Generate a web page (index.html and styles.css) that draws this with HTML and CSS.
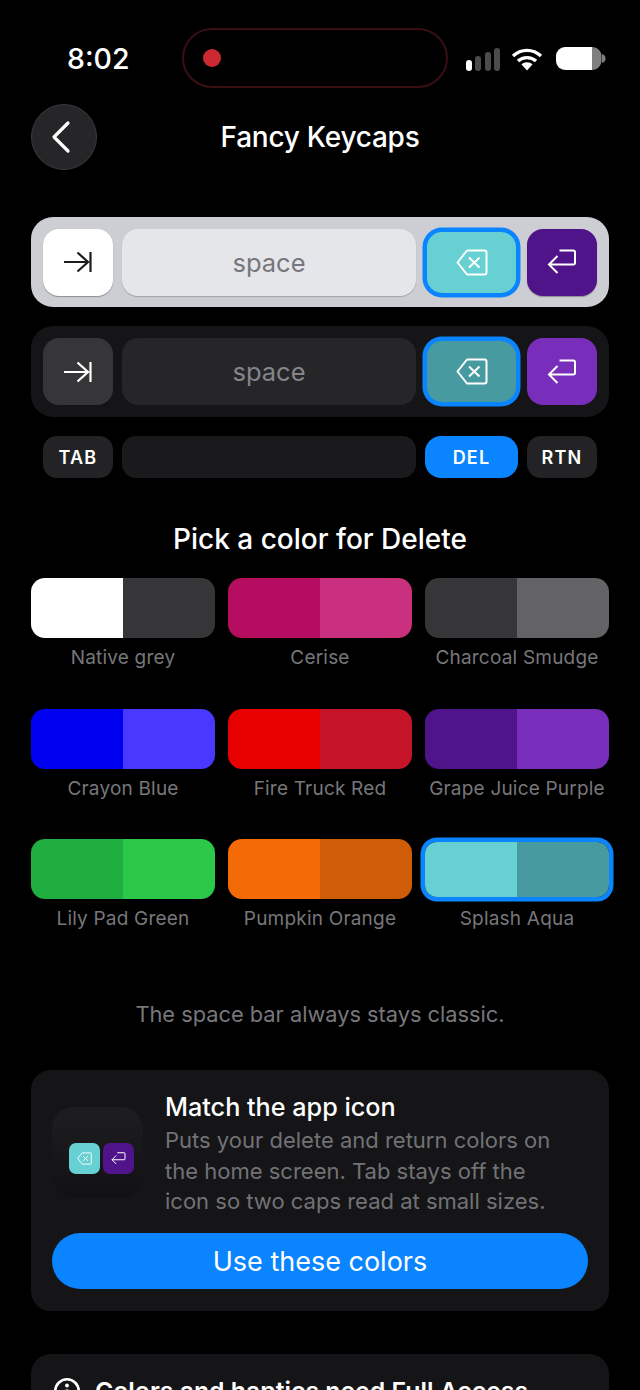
FILE: index.html
```html
<!DOCTYPE html>
<html lang="en">
<head>
<meta charset="utf-8">
<title>Fancy Keycaps</title>
<link rel="stylesheet" href="styles.css">
</head>
<body>
<svg class="defs" width="0" height="0" aria-hidden="true">
  <symbol id="i-tab" viewBox="0 0 30 22"><path d="M1 11H25.500M14.500 1.500L25 11L14.500 20.500M27.500 1V21" fill="none" stroke="currentColor" stroke-width="2.200"/></symbol>
  <symbol id="i-del" viewBox="0 0 32 27"><path d="M11 1.500H28.500A2 2 0 0 1 30.500 3.500V23.500A2 2 0 0 1 28.500 25.500H11L1.500 13.500Z" fill="none" stroke="currentColor" stroke-width="2" stroke-linejoin="round"/><path d="M13 8.500L23.500 18.500M23.500 8.500L13 18.500" fill="none" stroke="currentColor" stroke-width="2"/></symbol>
  <symbol id="i-ret" viewBox="0 0 30 26"><path d="M12.500 1.500H26.500A1.500 1.500 0 0 1 28 3V14A1.500 1.500 0 0 1 26.500 15.500H2M10.500 7L2 15.500L10.500 24" fill="none" stroke="currentColor" stroke-width="2"/></symbol>
</svg>
<div class="page">
  <header class="status">
    <span class="time">8:02</span>
    <div class="island"><span class="rec"></span></div>
    <div class="indicators">
      <svg class="signal" width="34" height="24" viewBox="0 0 34 24"><rect x="0" y="13" width="6" height="11" rx="3" fill="#fff"/><rect x="9" y="9" width="6" height="15" rx="3" fill="#4b4b4b"/><rect x="19" y="5" width="6" height="19" rx="3" fill="#4b4b4b"/><rect x="28" y="1" width="6" height="23" rx="3" fill="#4b4b4b"/></svg>
      <svg class="wifi" width="32" height="24" viewBox="0 0 32 24"><path d="M2 9C10 1.500 22 1.500 30 9M7 14C12 9.500 20 9.500 25 14M11.500 18.500C14 16.500 18 16.500 20.500 18.500" fill="none" stroke="#fff" stroke-width="3.400"/><path d="M12.500 19.500L16 17.500L19.500 19.500L16 23.500Z" fill="#fff"/></svg>
      <svg class="battery" width="50" height="24" viewBox="0 0 50 24"><path d="M9 0H36V23H9A9 9 0 0 1 0 14V9A9 9 0 0 1 9 0Z" fill="#fff"/><path d="M36 0H36.500A9 9 0 0 1 45.500 9V14A9 9 0 0 1 36.500 23H36Z" fill="#808080"/><path d="M46 7C48.500 7.500 49.500 9.500 49.500 11.500C49.500 13.500 48.500 15.500 46 16Z" fill="#808080"/></svg>
    </div>
  </header>
  <nav class="nav">
    <button class="back" type="button" aria-label="Back"><svg width="20" height="34" viewBox="0 0 20 34"><path d="M17 3L3 17L17 31" fill="none" stroke="#fff" stroke-width="3.200" stroke-linecap="round" stroke-linejoin="round"/></svg></button>
    <h1 class="title">Fancy Keycaps</h1>
  </nav>

  <section class="panel panel-light">
    <div class="key key-tab"><svg class="ico-tab"><use href="#i-tab"/></svg></div>
    <div class="key key-space">space</div>
    <div class="key key-del"><svg class="ico-del"><use href="#i-del"/></svg></div>
    <div class="key key-ret"><svg class="ico-ret"><use href="#i-ret"/></svg></div>
  </section>
  <section class="panel panel-dark">
    <div class="key key-tab"><svg class="ico-tab"><use href="#i-tab"/></svg></div>
    <div class="key key-space">space</div>
    <div class="key key-del"><svg class="ico-del"><use href="#i-del"/></svg></div>
    <div class="key key-ret"><svg class="ico-ret"><use href="#i-ret"/></svg></div>
  </section>
  <div class="chips">
    <div class="chip chip-tab">TAB</div>
    <div class="chip chip-space"></div>
    <div class="chip chip-del">DEL</div>
    <div class="chip chip-ret">RTN</div>
  </div>

  <h2 class="pick">Pick a color for Delete</h2>
  <div class="swatches">
    <div class="option"><div class="swatch"><span class="c-white"></span><span class="c-char"></span></div><p>Native grey</p></div>
    <div class="option"><div class="swatch"><span class="c-cer1"></span><span class="c-cer2"></span></div><p>Cerise</p></div>
    <div class="option"><div class="swatch"><span class="c-char"></span><span class="c-smu"></span></div><p>Charcoal Smudge</p></div>
    <div class="option"><div class="swatch"><span class="c-blu1"></span><span class="c-blu2"></span></div><p>Crayon Blue</p></div>
    <div class="option"><div class="swatch"><span class="c-red1"></span><span class="c-red2"></span></div><p>Fire Truck Red</p></div>
    <div class="option"><div class="swatch"><span class="c-pur1"></span><span class="c-pur2"></span></div><p>Grape Juice Purple</p></div>
    <div class="option"><div class="swatch"><span class="c-grn1"></span><span class="c-grn2"></span></div><p>Lily Pad Green</p></div>
    <div class="option"><div class="swatch"><span class="c-org1"></span><span class="c-org2"></span></div><p>Pumpkin Orange</p></div>
    <div class="option"><div class="swatch selected"><span class="c-aq1"></span><span class="c-aq2"></span></div><p>Splash Aqua</p></div>
  </div>

  <p class="note">The space bar always stays classic.</p>

  <section class="card">
    <div class="match">
      <div class="appicon">
        <div class="mini mini-del"><svg class="ico-mini-del"><use href="#i-del"/></svg></div>
        <div class="mini mini-ret"><svg class="ico-mini-ret"><use href="#i-ret"/></svg></div>
      </div>
      <div class="match-text">
        <h3>Match the app icon</h3>
        <p>Puts your delete and return colors on the home screen. Tab stays off the icon so two caps read at small sizes.</p>
      </div>
    </div>
    <button class="cta" type="button">Use these colors</button>
  </section>

  <section class="card card-info">
    <svg class="info" width="26" height="26" viewBox="0 0 26 26"><circle cx="13" cy="13" r="11.700" fill="none" stroke="#fff" stroke-width="2.600"/><circle cx="13" cy="7.500" r="1.900" fill="#fff"/><path d="M13 11.500V19" stroke="#fff" stroke-width="3"/></svg>
    <h3>Colors and haptics need Full Access</h3>
  </section>
</div>
</body>
</html>
```
FILE: styles.css
```css
* { box-sizing: border-box; margin: 0; padding: 0; }
html, body { width: 640px; height: 1390px; overflow: hidden; background: #000; }
body { font-family: Inter, "Liberation Sans", sans-serif; color: #fff; }
.defs { position: absolute; }
.page { display: flex; flex-direction: column; padding: 28px 31px 0; }

.status { display: flex; align-items: center; height: 60px; }
.time { width: 151px; padding-left: 36px; font-size: 28.500px; font-weight: 500; }
.island { width: 266px; height: 60px; border: 2px solid #3a0f14; border-radius: 30px; display: flex; align-items: center; padding-left: 19px; }
.rec { width: 18px; height: 18px; border-radius: 50%; background: #cc2a30; }
.indicators { display: flex; align-items: center; margin: 2px 0 0 18px; height: 24px; }
.wifi { margin-left: 11px; }
.battery { margin-left: 13px; }

.nav { display: flex; align-items: center; height: 66px; margin-top: 16px; position: relative; }
.back { width: 66px; height: 66px; border-radius: 50%; background: #262628; border: 1px solid #3a3a3c; display: flex; align-items: center; justify-content: center; padding-right: 6px; }
.title { position: absolute; left: 0; right: 0; text-align: center; font-size: 28px; font-weight: 500; letter-spacing: -0.25px; pointer-events: none; }

.panel { display: flex; align-items: center; height: 90px; margin-top: 47px; padding: 0 12px; border-radius: 22px; gap: 9px; }
.panel-dark { height: 91px; margin-top: 19px; background: #151517; }
.panel-light { background: #cdced3; }
.key { height: 67px; border-radius: 16px; display: flex; align-items: center; justify-content: center; flex: none; }
.key-tab { width: 70px; }
.key-space { width: 294px; font-size: 25.500px; }
.key-del { width: 89px; height: 61px; margin: 0 2px; border-radius: 15px; box-shadow: 0 0 0 4.500px #0a84ff; }
.key-ret { width: 70px; }
.ico-tab { width: 30px; height: 22px; }
.ico-del { width: 32px; height: 27px; }
.ico-ret { width: 30px; height: 26px; }

.panel-light .key-tab { background: #fff; color: #1c1c1e; box-shadow: 0 1px 1px #8e8e93; }
.panel-light .key-space { background: #e5e6ea; color: #76767c; box-shadow: 0 1px 1px #a2a2a8; }
.panel-light .key-del { background: #66d0d2; color: #fff; }
.panel-light .key-ret { background: #4f1489; color: #fff; box-shadow: 0 1px 1px #8e8e93; }
.panel-dark .key-tab { background: #363638; color: #fff; }
.panel-dark .key-space { background: #262628; color: #85858a; }
.panel-dark .key-del { background: #479a9f; color: #fff; }
.panel-dark .key-ret { background: #782dbb; color: #fff; }

.chips { display: flex; gap: 9px; height: 42px; margin-top: 19px; padding: 0 12px; }
.chip { height: 42px; border-radius: 14px; flex: none; display: flex; align-items: center; justify-content: center; background: #232325; font-size: 18px; font-weight: 600; letter-spacing: 1.200px; }
.chip-tab, .chip-ret { width: 70px; }
.chip-space { width: 294px; background: #1a1a1d; }
.chip-del { width: 93px; background: #0a84ff; border-radius: 16px; }

.pick { margin-top: 43px; height: 36px; line-height: 36px; text-align: center; font-size: 28px; font-weight: 500; }

.swatches { display: grid; grid-template-columns: repeat(3, 184px); column-gap: 13px; row-gap: 39.500px; margin-top: 21px; }
.swatch { display: flex; height: 60px; border-radius: 14px; overflow: hidden; }
.swatch span { flex: 1; }
.swatch.selected { height: 55px; margin: 3px 0 11px; border-radius: 12px; box-shadow: 0 0 0 4.500px #0a84ff; }
.option p { margin-top: 9px; height: 22px; line-height: 22px; text-align: center; font-size: 19px; letter-spacing: 0.2px; color: #77777b; white-space: nowrap; }
.c-white { background: #fff; } .c-char { background: #363638; } .c-smu { background: #636365; }
.c-cer1 { background: #b70d60; } .c-cer2 { background: #c9307d; }
.c-blu1 { background: #0000f0; } .c-blu2 { background: #4a38ff; }
.c-red1 { background: #e60000; } .c-red2 { background: #c51328; }
.c-pur1 { background: #4f1489; } .c-pur2 { background: #782dbb; }
.c-grn1 { background: #1fae3f; } .c-grn2 { background: #2cc84a; }
.c-org1 { background: #f46a06; } .c-org2 { background: #cf5c06; }
.c-aq1 { background: #66d0d2; } .c-aq2 { background: #479a9f; }

.note { margin-top: 70px; height: 28px; line-height: 28px; text-align: center; font-size: 21.800px; color: #77777b; }

.card { background: #151517; border-radius: 20px; margin-top: 42px; padding: 20px 21px 21px; height: 241px; }
.match { display: flex; align-items: flex-start; gap: 22px; height: 143px; }
.appicon { width: 91px; height: 91px; margin-top: 17px; border-radius: 22px; background: linear-gradient(#1e1e20, #111113); flex: none; display: flex; align-items: center; justify-content: center; gap: 3px; padding: 11px 0 0 8px; }
.mini { width: 31px; height: 31px; border-radius: 7px; color: #fff; display: flex; align-items: center; justify-content: center; flex: none; }
.mini-del { background: #66d0d2; }
.mini-ret { background: #4f1489; }
.ico-mini-del { width: 15px; height: 13px; }
.ico-mini-ret { width: 15px; height: 13px; }
.match-text { padding-right: 25px; }
.match-text h3 { margin-bottom: 1px; font-size: 25.200px; font-weight: 500; line-height: 34px; }
.match-text p { font-size: 22px; line-height: 30.500px; color: #727276; }
.cta { display: block; width: 100%; height: 56px; border: 0; border-radius: 28px; background: #0a84ff; color: #fff; font: 400 27px Inter, "Liberation Sans", sans-serif; }

.card-info { display: flex; gap: 15px; align-items: flex-start; padding: 24px 23px; height: 80px; margin-top: 43px; }
.info { flex: none; }
.card-info h3 { margin-top: -3px; font-size: 24.800px; font-weight: 600; line-height: 32px; white-space: nowrap; }
```
